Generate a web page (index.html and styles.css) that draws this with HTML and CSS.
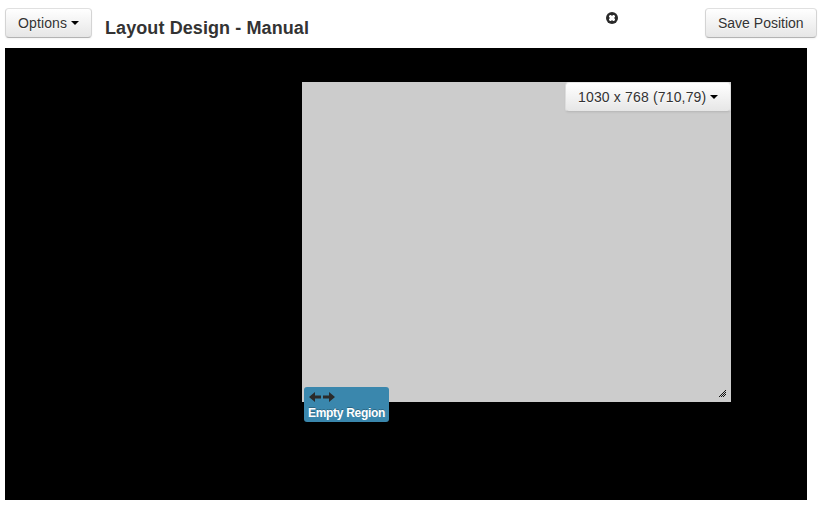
FILE: index.html
```html
<!DOCTYPE html>
<html lang="en">
<head>
<meta charset="utf-8">
<title>Layout Design - Manual</title>
<link rel="stylesheet" href="styles.css">
</head>
<body>
<header class="toolbar">
  <button class="btn options"><span class="options-text">Options</span><span class="caret"></span></button>
  <h1>Layout Design - Manual</h1>
  <svg class="close" width="12" height="12" viewBox="0 0 12 12"><circle cx="6" cy="6" r="6" fill="#2b2b2b"/><path d="M4 3h1l1 1 1-1h1l1 1v1L8 6l1 1v1L8 9H7L6 8 5 9H4L3 8V7l1-1-1-1V4z" fill="#fff"/></svg>
  <button class="btn save"><span class="save-text">Save Position</span></button>
</header>
<main class="canvas">
  <section class="region">
    <button class="btn size"><span class="size-text">1030 x 768 (710,79)</span><span class="caret"></span></button>
    <div class="label">
      <svg width="26" height="10" viewBox="0 0 26 10"><path d="M0 5l6-5v3.500h6v3H6V10zM26 5l-6-5v3.500h-6v3h6V10z" fill="#2b2b2b"/></svg>
      <span class="label-text">Empty Region</span>
    </div>
    <svg class="grip" width="7" height="7" viewBox="0 0 7 7" shape-rendering="crispEdges"><path d="M6 0h1v1h-1zM5 1h1v1h-1zM4 2h1v1h-1zM6 2h1v1h-1zM3 3h1v1h-1zM5 3h1v1h-1zM2 4h1v1h-1zM4 4h1v1h-1zM6 4h1v1h-1zM1 5h1v1h-1zM3 5h1v1h-1zM5 5h1v1h-1zM0 6h1v1h-1zM2 6h1v1h-1zM4 6h1v1h-1z" fill="#111"/></svg>
  </section>
</main>
</body>
</html>
```
FILE: styles.css
```css
* { box-sizing: border-box; }
body {
  margin: 0;
  padding: 8px 14px 0 5px;
  background: #fff;
  color: #333;
  font-family: "Liberation Sans", Arial, sans-serif;
  font-size: 14px;
  line-height: 20px;
}
.toolbar { display: flex; align-items: flex-start; height: 40px; }
.btn {
  display: flex;
  flex: none;
  align-items: flex-start;
  height: 30px;
  padding: 4px 12px;
  border: 1px solid #d0d0d0;
  border-color: #e0e0e0 #d4d4d4 #b3b3b3;
  border-radius: 4px;
  background: linear-gradient(#fff, #e6e6e6);
  box-shadow: inset 0 1px 0 rgba(255, 255, 255, .2), 0 1px 2px rgba(0, 0, 0, .05);
  color: #333;
  font: inherit;
  text-shadow: 0 1px 1px rgba(255, 255, 255, .75);
  white-space: nowrap;
}
.options { width: 87px; }
.options-text { letter-spacing: .13px; }
.save { width: 112px; }
.caret {
  margin: 8px 0 0 4px;
  border: 4px solid transparent;
  border-top-color: #000;
  border-bottom: 0;
}
h1 {
  width: 204px;
  margin: 10px 0 0 13px;
  font-size: 18px;
  line-height: 20px;
  letter-spacing: .09px;
  white-space: nowrap;
}
.close { margin: 4px auto 0 297px; }
.canvas {
  width: 802px;
  height: 452px;
  padding: 34px 0 0 297px;
  background: #000;
}
.region {
  position: relative;
  display: flex;
  justify-content: flex-end;
  width: 429px;
  height: 320px;
  background: #ccc;
}
.size { width: 166px; border-color: #e6e6e6 #ddd #bbb; }
.size-text { letter-spacing: .16px; }
.label {
  position: absolute;
  left: 2px;
  top: 305px;
  width: 85px;
  height: 35px;
  padding: 5px 4px;
  border-radius: 3px;
  background: #3a87ad;
  color: #fff;
  font-size: 12px;
  font-weight: bold;
  line-height: 14px;
  letter-spacing: -.3px;
  text-shadow: 0 -1px 0 rgba(0, 0, 0, .25);
  white-space: nowrap;
}
.label svg { display: block; margin: 0 0 4px 1px; }
.grip { position: absolute; right: 5px; bottom: 5px; }
```
